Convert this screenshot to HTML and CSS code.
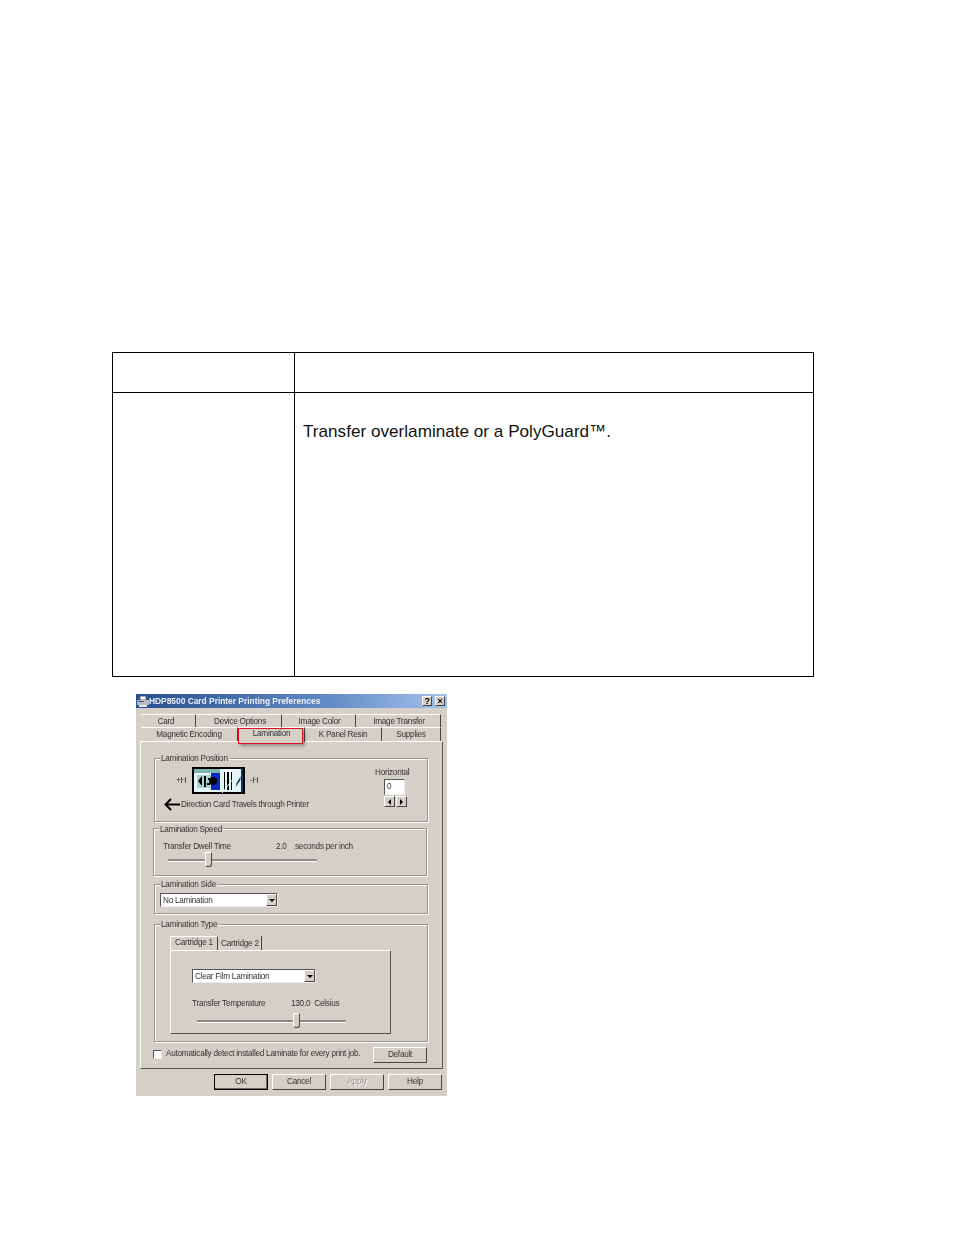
FILE: index.html
```html
<!DOCTYPE html>
<html lang="en">
<head>
    <meta charset="UTF-8">
    <title>Lamination</title>
    <link rel="stylesheet" href="styles.css">
</head>
<body>
    <table class="doc-table">
        <tr class="head-row"><td class="col-a"></td><td></td></tr>
        <tr class="body-row"><td class="col-a"></td><td class="desc">Transfer overlaminate or a PolyGuard™.</td></tr>
    </table>

    <div class="dialog">
        <div class="titlebar">
            <svg class="app-icon" width="12" height="11" viewBox="0 0 12 11">
                <path d="M3 0h6v4H3z" fill="#fff" stroke="#667"/>
                <path d="M0 4h12v5H0z" fill="#b8bcc8"/>
                <path d="M2 9h8v2H2z" fill="#e8e8e8"/>
                <path d="M1 5h6v1H1z" fill="#556"/>
            </svg>
            <span class="title-text">HDP8500 Card Printer Printing Preferences</span>
            <span class="cap-btn first">?</span>
            <span class="cap-btn">×</span>
        </div>

        <div class="tabs tabs-top">
            <div class="tab w55">Card</div>
            <div class="tab w86">Device Options</div>
            <div class="tab w74">Image Color</div>
            <div class="tab w85">Image Transfer</div>
        </div>
        <div class="tabs tabs-bottom">
            <div class="tab w97">Magnetic Encoding</div>
            <div class="tab active">Lamination</div>
            <div class="tab w77">K Panel Resin</div>
            <div class="tab w59">Supplies</div>
        </div>
        <div class="red-box"></div>

        <div class="panel">
            <div class="group g-position">
                <span class="legend">Lamination Position</span>
                <div class="pos-left">
                    <div class="pos-row">
                        <span class="plus-h">+H</span>
                        <svg class="thumb" width="53" height="27" viewBox="0 0 53 27">
                            <rect width="53" height="27" fill="#000"/>
                            <rect x="2" y="2" width="47" height="23" fill="#e6f6f6"/>
                            <rect x="2" y="2" width="26" height="4" fill="#7fb5b5"/>
                            <rect x="19" y="6" width="9" height="17" fill="#0a2ac0"/>
                            <rect x="5" y="8" width="14" height="13" fill="#a8d2d2"/>
                            <path d="M6 14l4-5v10zM12 9h2v11h-2z" fill="#000"/>
                            <circle cx="21" cy="14" r="4" fill="#000"/>
                            <path d="M16 11h3v2h-3zM15 16h3v2h-3z" fill="#000"/>
                            <path d="M32 5h1v18h-1zM35 5h2v18h-2zM39 5h1v18h-1z" fill="#000"/>
                            <path d="M44 16l5-8v5l-6 9zM30 26L46 6" stroke="#dff" fill="#334"/>
                            <rect x="49" y="2" width="2" height="23" fill="#136"/>
                        </svg>
                        <span class="minus-h">-H</span>
                    </div>
                    <div class="dir-row">
                        <svg width="16" height="13" viewBox="0 0 16 13">
                            <path d="M1 6.5h15M7 1L1.5 6.5 7 12" fill="none" stroke="#000" stroke-width="2"/>
                        </svg>
                        <span>Direction Card Travels through Printer</span>
                    </div>
                </div>
                <div class="pos-right">
                    <span class="h-label">Horizontal</span>
                    <div class="field spin-field">0</div>
                    <div class="spin">
                        <span class="spin-btn"><i class="arrow-left"></i></span>
                        <span class="spin-btn"><i class="arrow-right"></i></span>
                    </div>
                </div>
            </div>

            <div class="group g-speed">
                <span class="legend">Lamination Speed</span>
                <div class="value-row">
                    <span class="dwell">Transfer Dwell Time</span>
                    <span class="dwell-val">2.0</span>
                    <span>seconds per inch</span>
                </div>
                <div class="slider speed-slider"><span class="knob"></span></div>
            </div>

            <div class="group g-side">
                <span class="legend">Lamination Side</span>
                <div class="combo side-combo">No Lamination<span class="combo-btn"><i class="arrow-down"></i></span></div>
            </div>

            <div class="group g-type">
                <span class="legend">Lamination Type</span>
                <div class="inner-tabs">
                    <div class="inner-tab on">Cartridge 1</div>
                    <div class="inner-tab">Cartridge 2</div>
                </div>
                <div class="inner-panel">
                    <div class="combo type-combo">Clear Film Lamination<span class="combo-btn"><i class="arrow-down"></i></span></div>
                    <div class="value-row temp-row">
                        <span class="temp">Transfer Temperature</span>
                        <span>130.0&nbsp; Celsius</span>
                    </div>
                    <div class="slider temp-slider"><span class="knob"></span></div>
                </div>
            </div>

            <div class="auto-row">
                <span class="check"></span>
                <span class="auto-text">Automatically detect installed Laminate for every print job.</span>
                <span class="btn default-btn">Default</span>
            </div>
        </div>

        <div class="footer">
            <span class="btn ok">OK</span>
            <span class="btn">Cancel</span>
            <span class="btn disabled">Apply</span>
            <span class="btn">Help</span>
        </div>
    </div>
</body>
</html>
```

FILE: styles.css
```css
body {
    margin: 0;
    padding-top: 352px;
    background-color: #fff;
    font-family: "Liberation Sans", Arial, sans-serif;
}

.doc-table {
    border-collapse: collapse;
    margin-left: 112px;
    width: 702px;
    table-layout: fixed;
}

.doc-table td {
    border: 1px solid #000;
    padding: 0;
}

.col-a {
    width: 181px;
}

.head-row {
    height: 40px;
}

.body-row {
    height: 284px;
}

.doc-table .desc {
    vertical-align: top;
    padding: 28px 0 0 8px;
    font-size: 17.15px;
    line-height: 21px;
    color: #111;
}

/* dialog */
.dialog {
    position: relative;
    width: 311px;
    height: 402px;
    margin: 17px 0 0 136px;
    background-color: #d4d0c8;
    font-size: 8.2px;
    letter-spacing: -0.25px;
    line-height: 11px;
    color: #333;
    filter: blur(0.3px);
}

.titlebar {
    display: flex;
    align-items: center;
    height: 14px;
    background: linear-gradient(to right, #27508f, #5f88c4 60%, #a4c2ea);
    color: #fff;
    padding: 0 2px 0 1px;
}

.title-text {
    flex: 1;
    font-weight: bold;
    font-size: 8.4px;
    letter-spacing: 0;
    color: #eef2f8;
}

.cap-btn {
    width: 10px;
    height: 10px;
    margin-left: 1px;
    background-color: #d4d0c8;
    border: 1px solid;
    border-color: #fff #444 #444 #fff;
    box-sizing: border-box;
    color: #000;
    font-size: 9px;
    line-height: 8px;
    font-weight: bold;
    text-align: center;
}

.cap-btn.first {
    margin-right: 2px;
}

.tabs {
    display: flex;
    padding-left: 5px;
}

.tabs-top {
    height: 13px;
    margin-top: 6px;
}

.tabs-bottom {
    height: 14px;
}

.tab {
    box-sizing: border-box;
    text-align: center;
    border-top: 1px solid #fff;
    border-right: 1px solid #444;
    line-height: 13px;
}

.w55 { width: 55px; padding-right: 4px; }
.w86 { width: 86px; padding-left: 3px; }
.w74 { width: 74px; padding-left: 2px; }
.w85 { width: 85px; padding-left: 2px; }
.w97 { width: 97px; }
.w77 { width: 77px; }
.w59 { width: 59px; }

.tab.active {
    width: 67px;
    position: relative;
    z-index: 1;
    height: 15px;
    background-color: #d4d0c8;
    border-left: 1px solid #fff;
    line-height: 11px;
}

.red-box {
    position: absolute;
    left: 102px;
    top: 34px;
    width: 63px;
    height: 14px;
    border: 1px solid #d8121c;
    box-shadow: 2px 2px 3px rgba(0, 0, 0, 0.3);
    z-index: 2;
}

.panel {
    box-sizing: border-box;
    width: 303px;
    height: 328px;
    margin-left: 4px;
    padding: 16px 0 0 13px;
    border: 1px solid;
    border-color: #fff #555 #555 #fff;
}

.group {
    position: relative;
    box-sizing: border-box;
    width: 274px;
    border: 1px solid #96948e;
    box-shadow: 1px 1px 0 #fff, inset 1px 1px 0 #fff;
}

.legend {
    position: absolute;
    top: -6px;
    left: 5px;
    padding: 0 1px;
    background-color: #d4d0c8;
}

.g-position {
    display: flex;
    height: 64px;
}

.pos-left {
    width: 216px;
}

.pos-row {
    display: flex;
    align-items: center;
    padding: 8px 0 0 21px;
}

.plus-h {
    width: 16px;
}

.minus-h {
    margin-left: 5px;
}

.dir-row {
    display: flex;
    align-items: center;
    padding: 4px 0 0 9px;
}

.dir-row span {
    margin-left: 1px;
}

.pos-right {
    display: flex;
    flex-direction: column;
    padding-top: 8px;
}

.h-label {
    margin-bottom: 1px;
    margin-left: 4px;
}

.field,
.combo {
    box-sizing: border-box;
    background-color: #fff;
    border: 1px solid;
    border-color: #555 #eee #eee #555;
    color: #333;
}

.spin-field {
    width: 21px;
    height: 16px;
    margin-left: 13px;
    padding-left: 2px;
    line-height: 13px;
}

.spin {
    display: flex;
    gap: 1px;
    margin: 1px 0 0 13px;
}

.spin-btn,
.combo-btn {
    display: flex;
    align-items: center;
    justify-content: center;
    box-sizing: border-box;
    background-color: #d4d0c8;
    border: 1px solid;
    border-color: #fff #444 #444 #fff;
}

.spin-btn {
    width: 11px;
    height: 11px;
}

.arrow-left {
    border: 3px solid transparent;
    border-left: 0;
    border-right-color: #000;
}

.arrow-right {
    border: 3px solid transparent;
    border-right: 0;
    border-left-color: #000;
}

.arrow-down {
    border: 3px solid transparent;
    border-bottom: 0;
    border-top-color: #000;
}

.g-speed {
    height: 48px;
    margin: 6px 0 0 -1px;
}

.g-speed .legend {
    top: -5px;
}

.value-row {
    display: flex;
}

.g-speed .value-row {
    padding: 12px 0 0 9px;
}

.dwell {
    width: 113px;
}

.dwell-val {
    width: 19px;
}

.slider {
    position: relative;
    height: 2px;
    background-color: #8a8a86;
    border-bottom: 1px solid #fff;
}

.speed-slider {
    width: 149px;
    margin: 7px 0 0 14px;
}

.knob {
    position: absolute;
    top: -7px;
    width: 7px;
    height: 15px;
    box-sizing: border-box;
    background-color: #d4d0c8;
    border: 1px solid;
    border-color: #fff #444 #444 #fff;
    border-radius: 0 0 3px 3px;
}

.speed-slider .knob {
    left: 37px;
}

.g-side {
    height: 30px;
    margin-top: 8px;
}

.combo {
    position: relative;
    height: 14px;
    padding-left: 2px;
    line-height: 13px;
    color: #333;
}

.side-combo {
    width: 118px;
    margin: 8px 0 0 5px;
}

.combo-btn {
    position: absolute;
    top: 0;
    right: 0;
    width: 11px;
    height: 12px;
}

.g-type {
    height: 118px;
    margin-top: 10px;
}

.inner-tabs {
    display: flex;
    padding: 11px 0 0 15px;
}

.inner-tab {
    box-sizing: border-box;
    width: 44px;
    height: 14px;
    padding-left: 3px;
    border-right: 1px solid #444;
    line-height: 16px;
    white-space: nowrap;
}

.inner-tab.on {
    width: 48px;
    text-align: center;
    padding-left: 0;
    line-height: 12px;
    border-left: 1px solid #fff;
    border-top: 1px solid #fff;
}

.inner-panel {
    box-sizing: border-box;
    width: 221px;
    height: 84px;
    margin-left: 15px;
    padding: 18px 0 0 21px;
    border: 1px solid;
    border-color: #fff #555 #555 #fff;
}

.type-combo {
    width: 124px;
}

.temp-row {
    padding-top: 15px;
}

.temp {
    width: 99px;
}

.temp-slider {
    width: 149px;
    margin: 11px 0 0 5px;
}

.temp-slider .knob {
    left: 96px;
}

.auto-row {
    display: flex;
    align-items: flex-start;
    margin: 6px 0 0 -1px;
}

.check {
    box-sizing: border-box;
    width: 9px;
    height: 9px;
    margin-top: 2px;
    background-color: #fff;
    border: 1px solid;
    border-color: #555 #eee #eee #555;
}

.auto-text {
    width: 207px;
    margin-left: 4px;
    white-space: nowrap;
}

.btn {
    box-sizing: border-box;
    width: 54px;
    height: 16px;
    background-color: #d4d0c8;
    border: 1px solid;
    border-color: #fff #444 #444 #fff;
    line-height: 14px;
    text-align: center;
}

.default-btn {
    margin-top: -1px;
}

.footer {
    display: flex;
    justify-content: flex-end;
    gap: 4px;
    padding: 5px 5px 0 0;
}

.btn.ok {
    border: 1px solid #000;
    box-shadow: inset -1px -1px 0 #666;
}

.btn.disabled {
    color: #9a9890;
    text-shadow: 1px 1px 0 #fff;
}
```
